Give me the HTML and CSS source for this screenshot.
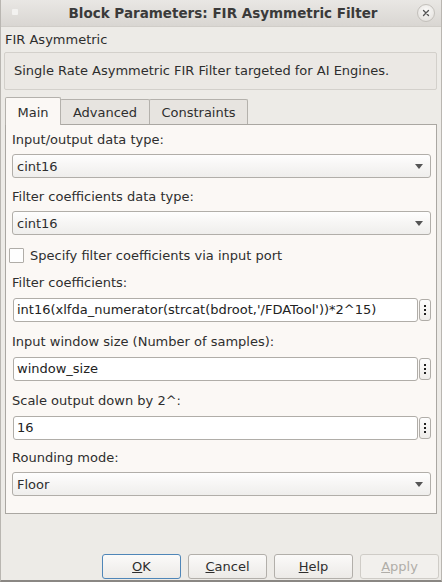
FILE: index.html
```html
<!DOCTYPE html>
<html>
<head>
<meta charset="utf-8">
<link rel="stylesheet" href="styles.css">
</head>
<body>
<div class="window">
  <div class="titlebar">
    <span class="menu-dot"></span>
    <span class="title">Block Parameters: FIR Asymmetric Filter</span>
    <span class="close">
      <svg width="18" height="18" viewBox="0 0 18 18"><path d="M6.2 6.2 L11.8 11.8 M11.8 6.2 L6.2 11.8" stroke="#555" stroke-width="1.5" stroke-linecap="round"/></svg>
    </span>
  </div>
  <div class="content">
    <div class="block-name">FIR Asymmetric</div>
    <div class="desc">Single Rate Asymmetric FIR Filter targeted for AI Engines.</div>
    <div class="tabs">
      <div class="tab active">Main</div>
      <div class="tab t-adv">Advanced</div>
      <div class="tab t-con">Constraints</div>
    </div>
    <div class="panel">
      <div class="label">Input/output data type:</div>
      <div class="combo"><span>cint16</span><i class="arrow"></i></div>

      <div class="label">Filter coefficients data type:</div>
      <div class="combo"><span>cint16</span><i class="arrow"></i></div>

      <div class="check-row"><span class="checkbox"></span><span>Specify filter coefficients via input port</span></div>

      <div class="label for-edit">Filter coefficients:</div>
      <div class="edit-row"><div class="edit">int16(xlfda_numerator(strcat(bdroot,'/FDATool'))*2^15)</div><div class="more"><i></i><i></i><i></i></div></div>

      <div class="label for-edit">Input window size (Number of samples):</div>
      <div class="edit-row"><div class="edit">window_size</div><div class="more"><i></i><i></i><i></i></div></div>

      <div class="label for-edit">Scale output down by 2^:</div>
      <div class="edit-row"><div class="edit">16</div><div class="more"><i></i><i></i><i></i></div></div>

      <div class="label last">Rounding mode:</div>
      <div class="combo"><span>Floor</span><i class="arrow"></i></div>
    </div>
  </div>
  <div class="buttons">
    <div class="btn default"><u>O</u>K</div>
    <div class="btn"><u>C</u>ancel</div>
    <div class="btn"><u>H</u>elp</div>
    <div class="btn disabled"><u>A</u>pply</div>
  </div>
</div>
</body>
</html>
```
FILE: styles.css
```css
html, body {
  margin: 0;
  padding: 0;
  background: #edebe7;
}
body {
  width: 442px;
  height: 582px;
  overflow: hidden;
  font-family: "DejaVu Sans", sans-serif;
  font-size: 13px;
  color: #2e2e2e;
}
.window {
  box-sizing: border-box;
  width: 442px;
  height: 582px;
  border-left: 1px solid #b9b6b1;
  border-right: 1px solid #b9b6b1;
  border-bottom: 2px solid #8a8783;
  display: flex;
  flex-direction: column;
  background: #edebe7;
}
.titlebar {
  height: 27px;
  position: relative;
  display: flex;
  align-items: center;
  justify-content: center;
  background: linear-gradient(#e9e7e4, #d9d6d2);
  border-bottom: 1px solid #d0cdc8;
  box-sizing: border-box;
}
.title {
  font-weight: bold;
  font-size: 13.5px;
  color: #3a3a3a;
  margin-left: 4px;
}
.menu-dot {
  position: absolute;
  left: 11px;
  top: 9px;
  width: 6px;
  height: 6px;
  background: #f3f2f0;
  border-radius: 1px;
}
.close {
  position: absolute;
  left: 416px;
  top: 4px;
  width: 18px;
  height: 18px;
  border-radius: 50%;
  border: 1px solid #c3c0bb;
  background: radial-gradient(circle at 50% 35%, #fbfaf9, #e0ddd9);
  box-sizing: border-box;
  display: flex;
  align-items: center;
  justify-content: center;
}
.close svg { width: 16px; height: 16px; }
.content {
  padding: 0 4px 0 3px;
  display: flex;
  flex-direction: column;
}
.block-name {
  margin-top: 5px;
  height: 16px;
  line-height: 16px;
  padding-left: 1px;
}
.desc {
  margin-top: 4px;
  height: 38px;
  box-sizing: border-box;
  border: 1px solid #d3d0cb;
  border-radius: 2px;
  line-height: 36px;
  padding-left: 9px;
  background: #ebe8e4;
}
.tabs {
  display: flex;
  height: 27px;
  margin-top: 7px;
  align-items: flex-end;
  padding-left: 1px;
  position: relative;
  z-index: 1;
}
.tab {
  box-sizing: border-box;
  height: 25px;
  border: 1px solid #b4b1ac;
  border-bottom: none;
  border-radius: 2px 2px 0 0;
  background: #e7e4e0;
  text-align: center;
  line-height: 26px;
  margin-left: -1px;
}
.tab.active {
  height: 28px;
  margin-bottom: -1px;
  background: #fbf8f5;
  width: 56px;
  margin-left: 0;
  line-height: 30px;
}
.t-adv { width: 90px; }
.t-con { width: 99px; }
.panel {
  box-sizing: border-box;
  margin-left: 1px;
  height: 390px;
  border: 1px solid #aaa7a2;
  background: #fbf8f5;
  padding: 7px 5px 0 6px;
  display: flex;
  flex-direction: column;
}
.label {
  height: 16px;
  line-height: 16px;
  margin-top: 11px;
  margin-bottom: 6px;
}
.label.for-edit { margin-bottom: 7px; }
.edit-row + .label { margin-top: 12px; }
.edit-row + .label.last { margin-top: 10px; }
.panel > .label:first-child { margin-top: 0; }
.combo {
  box-sizing: border-box;
  height: 24px;
  border: 1px solid #b1aea9;
  border-radius: 3px;
  background: linear-gradient(#fefefe, #f8f7f6 40%, #efeeec);
  display: flex;
  align-items: center;
  justify-content: space-between;
  padding: 0 7px 0 4px;
}
.arrow {
  width: 0;
  height: 0;
  border-left: 4px solid transparent;
  border-right: 4px solid transparent;
  border-top: 5px solid #555;
  margin-top: 1px;
}
.check-row {
  display: flex;
  align-items: center;
  height: 16px;
  margin-top: 12px;
  margin-left: -3px;
}
.checkbox {
  width: 13px;
  height: 13px;
  border: 1px solid #b0ada8;
  background: #fefefe;
  margin-right: 6px;
  border-radius: 1px;
}
.check-row + .label { margin-top: 12px; }
.edit-row {
  display: flex;
  height: 24px;
  gap: 1px;
  padding-left: 1px;
}
.edit {
  flex: 1;
  box-sizing: border-box;
  border: 1px solid #b0ada8;
  border-radius: 3px;
  background: #fff;
  line-height: 22px;
  padding-left: 3px;
  color: #222;
  white-space: nowrap;
  overflow: hidden;
}
.more {
  width: 12px;
  box-sizing: border-box;
  margin: 1px 0;
  border: 1px solid #b0ada8;
  border-radius: 3px;
  background: linear-gradient(#fdfdfd, #eeece9);
  display: flex;
  flex-direction: column;
  align-items: center;
  justify-content: center;
  gap: 2px;
}
.more i {
  display: block;
  width: 2px;
  height: 2px;
  background: #222;
}
.buttons {
  margin-top: auto;
  display: flex;
  justify-content: flex-end;
  gap: 7px;
  padding-right: 2px;
  padding-bottom: 1px;
}
.btn {
  box-sizing: border-box;
  width: 79px;
  height: 25px;
  border: 1px solid #b2afaa;
  border-radius: 3px;
  background: linear-gradient(#fbfaf9, #eceae7);
  text-align: center;
  line-height: 23px;
  color: #2e2e2e;
}
.btn.default {
  border-color: #4f86b8;
}
.btn.disabled {
  color: #b0ada8;
  border-color: #cfccc7;
  background: #f2f0ed;
}
```
